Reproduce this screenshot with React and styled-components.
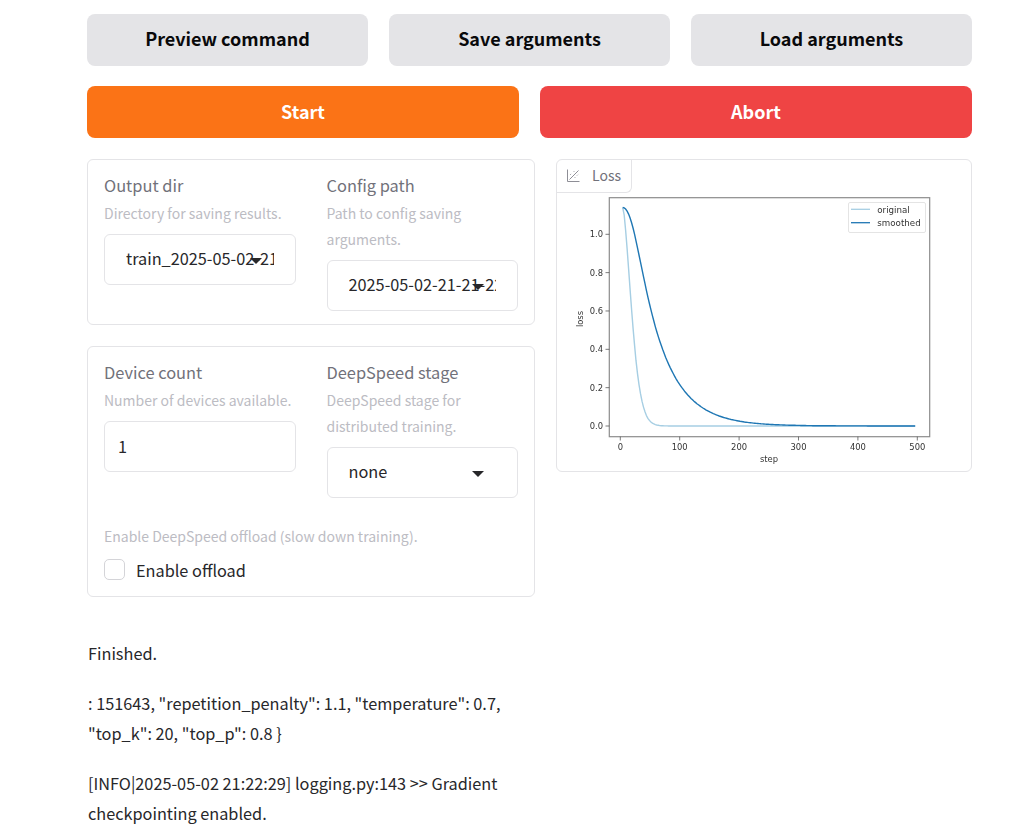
import React from "react";
import styled, { createGlobalStyle } from "styled-components";

const GlobalStyle = createGlobalStyle`
	* {
		box-sizing: border-box;
	}
	body {
		margin: 0;
		background: #fff;
		font-family: "Noto Sans CJK SC", "Noto Sans", sans-serif;
		color: #27272a;
	}
`;

const Page = styled.div`
	width: 885px;
	margin-left: 87px;
	padding-top: 14px;
	display: flex;
	flex-direction: column;
	gap: 20px;
`;
const ButtonRow = styled.div`
	display: flex;
	gap: 21px;
`;
const Button = styled.button`
	flex: 1;
	height: 52px;
	padding: 0 0 3px;
	border: none;
	border-radius: 8px;
	font-family: inherit;
	font-size: 18px;
	font-weight: 600;
	background: ${(props) => props.$bg};
	color: #fff;
`;
const SecondaryButton = styled(Button)`
	padding-bottom: 5px;
	background: #e4e4e7;
	color: #09090b;
`;
const Columns = styled.div`
	display: flex;
	gap: 21px;
	align-items: flex-start;
	margin-top: 1px;
`;
const LeftColumn = styled.div`
	width: 448px;
	display: flex;
	flex-direction: column;
	gap: 21.5px;
`;
const Panel = styled.div`
	border: 1px solid #e4e4e7;
	border-radius: 6px;
	padding: 16px 16px 13px;
	background: #fff;
`;
const FieldRow = styled.div`
	display: flex;
	gap: 31px;
`;
const Field = styled.div`
	flex: 1;
	min-width: 0;
`;
const Label = styled.div`
	font-size: 16.4px;
	line-height: 18px;
	padding-bottom: 4px;
	color: #71717a;
`;
const Info = styled.div`
	font-size: 14px;
	line-height: 26px;
	color: #bcbcc3;
	margin-top: 2px;
	padding-bottom: 1px;
`;
const SelectBox = styled.div`
	position: relative;
	height: 50.5px;
	margin-top: 7px;
	padding: 0 21px 2px 21px;
	display: flex;
	align-items: center;
	border: 1px solid #e4e4e7;
	border-radius: 6px;
	font-size: 16.3px;
	color: #27272a;
`;
const SelectText = styled.div`
	overflow: hidden;
	white-space: nowrap;
`;
const Arrow = styled.span`
	position: absolute;
	right: 33px;
	top: 23px;
	border-left: 6px solid transparent;
	border-right: 6px solid transparent;
	border-top: 6px solid #27272a;
`;
const NumberBox = styled(SelectBox)`
	padding: 0 13px 1px;
`;
const CheckGroup = styled.div`
	margin-top: 25px;
	padding-bottom: 1.5px;
`;
const CheckRow = styled.div`
	display: flex;
	align-items: center;
	gap: 11px;
	margin-top: 8px;
	font-size: 16.3px;
	line-height: 24px;
`;
const CheckBox = styled.span`
	width: 21px;
	height: 21px;
	border: 1px solid #d4d4d8;
	border-radius: 5px;
`;
const ChartPanel = styled.div`
	width: 416px;
	height: 313px;
	border: 1px solid #e4e4e7;
	border-radius: 6px;
`;
const ChartTab = styled.div`
	width: 75px;
	height: 33px;
	display: flex;
	align-items: center;
	gap: 12px;
	padding: 0 0 2px 10px;
	border-right: 1px solid #e4e4e7;
	border-bottom: 1px solid #e4e4e7;
	border-bottom-right-radius: 6px;
	font-size: 14px;
	color: #71717a;
`;
const ChartSvg = styled.svg`
	display: block;
	font-family: "DejaVu Sans", sans-serif;
	filter: blur(0.3px);
`;
const Log = styled.div`
	width: 448px;
	margin-top: 21px;
	padding-left: 1px;
	font-size: 16.3px;
	line-height: 30px;
	color: #27272a;
`;
const LogLine = styled.p`
	margin: 0 0 20px;
`;

const LineChartIcon = () => (
	<svg width="13" height="13" viewBox="0 0 13 13" fill="none" stroke="#8e8e96" strokeWidth="1">
		<path d="M0.5 0.5V12.5H12.5" />
		<path d="M2.5 10.5L11.5 1.5" />
		<path d="M3 6L4.5 4.5M6.5 3L7.5 2M7.5 9L8.5 8M10 6.5L11.5 5" strokeDasharray="1 1" />
	</svg>
);

// chart coordinates are relative to the panel's inner box (557, 193)
const X = (step) => 620.3 - 557 + (step * 297) / 500;
const Y = (loss) => 426 - 193 - loss * 191.7;

const steps = [];
for (let s = 4; s <= 497; s += 2.5) steps.push(s);

const original = (s) => 1.14 * Math.exp(-Math.pow(Math.max(s - 4, 0) / 20, 1.6));
const smoothedValues = {};
let last = 1.14;
steps.forEach((s) => {
	last = 0.948 * last + 0.052 * original(s);
	smoothedValues[s] = last;
});
const smoothed = (s) => smoothedValues[s];

const curve = (fn) => steps.map((s) => `${X(s).toFixed(1)},${Y(fn(s)).toFixed(1)}`).join(" ");

const xTicks = [0, 100, 200, 300, 400, 500];
const yTicks = [0, 0.2, 0.4, 0.6, 0.8, 1];

const LossChart = () => (
	<ChartSvg width="414" height="278" viewBox="0 0 414 278">
		<rect x="52.3" y="4.7" width="320.4" height="239" fill="none" stroke="#8c8c8c" strokeWidth="1.2" />
		{xTicks.map((t) => (
			<g key={t}>
				<line x1={X(t)} x2={X(t)} y1="243.7" y2="247.5" stroke="#444" strokeWidth="0.7" />
				<text x={X(t)} y="257" fontSize="8.4" fill="#333" textAnchor="middle">
					{t}
				</text>
			</g>
		))}
		{yTicks.map((t) => (
			<g key={t}>
				<line x1="48.5" x2="52.3" y1={Y(t)} y2={Y(t)} stroke="#444" strokeWidth="0.7" />
				<text x="46" y={Y(t) + 3} fontSize="8.4" fill="#333" textAnchor="end">
					{t.toFixed(1)}
				</text>
			</g>
		))}
		<text x="212" y="269" fontSize="8.4" fill="#333" textAnchor="middle">
			step
		</text>
		<text x="26" y="126" fontSize="8.4" fill="#333" textAnchor="middle" transform="rotate(-90 26 126)">
			loss
		</text>
		<polyline points={curve(original)} fill="none" stroke="#a6cee3" strokeWidth="1.4" />
		<polyline points={curve(smoothed)} fill="none" stroke="#1f77b4" strokeWidth="1.4" />
		<rect x="291.5" y="9.5" width="77" height="30" rx="1.5" fill="#fff" stroke="#ddd" strokeWidth="0.8" />
		<line x1="294" x2="313" y1="16.3" y2="16.3" stroke="#a6cee3" strokeWidth="1.3" />
		<line x1="294" x2="313" y1="29.7" y2="29.7" stroke="#1f77b4" strokeWidth="1.3" />
		<text x="320.3" y="19.5" fontSize="8.7" fill="#333">
			original
		</text>
		<text x="320.3" y="33" fontSize="8.7" fill="#333">
			smoothed
		</text>
	</ChartSvg>
);

const App = () => {
	return (
		<Page>
			<GlobalStyle />
			<ButtonRow>
				<SecondaryButton>Preview command</SecondaryButton>
				<SecondaryButton>Save arguments</SecondaryButton>
				<SecondaryButton>Load arguments</SecondaryButton>
			</ButtonRow>
			<ButtonRow>
				<Button $bg="#fb7316">Start</Button>
				<Button $bg="#ef4444">Abort</Button>
			</ButtonRow>
			<Columns>
				<LeftColumn>
					<Panel>
						<FieldRow>
							<Field>
								<Label>Output dir</Label>
								<Info>Directory for saving results.</Info>
								<SelectBox>
									<SelectText>train_2025-05-02-21-21-22</SelectText>
									<Arrow />
								</SelectBox>
							</Field>
							<Field>
								<Label>Config path</Label>
								<Info>Path to config saving arguments.</Info>
								<SelectBox>
									<SelectText>2025-05-02-21-21-22.yaml</SelectText>
									<Arrow />
								</SelectBox>
							</Field>
						</FieldRow>
					</Panel>
					<Panel>
						<FieldRow>
							<Field>
								<Label>Device count</Label>
								<Info>Number of devices available.</Info>
								<NumberBox>1</NumberBox>
							</Field>
							<Field>
								<Label>DeepSpeed stage</Label>
								<Info>DeepSpeed stage for distributed training.</Info>
								<SelectBox>
									<SelectText>none</SelectText>
									<Arrow />
								</SelectBox>
							</Field>
						</FieldRow>
						<CheckGroup>
							<Info>Enable DeepSpeed offload (slow down training).</Info>
							<CheckRow>
								<CheckBox />
								Enable offload
							</CheckRow>
						</CheckGroup>
					</Panel>
				</LeftColumn>
				<ChartPanel>
					<ChartTab>
						<LineChartIcon />
						Loss
					</ChartTab>
					<LossChart />
				</ChartPanel>
			</Columns>
			<Log>
				<LogLine>Finished.</LogLine>
				<LogLine>: 151643, "repetition_penalty": 1.1, "temperature": 0.7, "top_k": 20, "top_p": 0.8 }</LogLine>
				<LogLine>[INFO|2025-05-02 21:22:29] logging.py:143 &gt;&gt; Gradient checkpointing enabled.</LogLine>
			</Log>
		</Page>
	);
};

export default App;
